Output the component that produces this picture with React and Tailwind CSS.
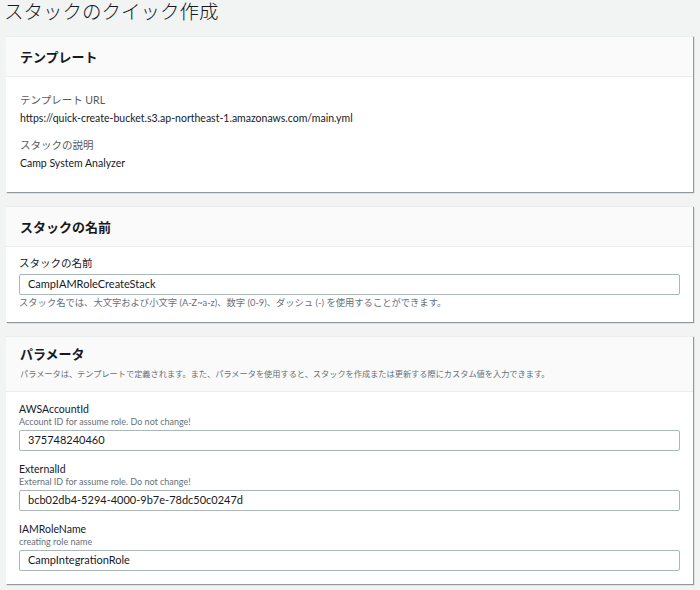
import React from 'react';

const FONT = { fontFamily: 'Lato, "Noto Sans CJK JP", sans-serif' };

const Card = ({ title, desc, children, bodyClass }) => (
  <div className="bg-white ml-[6px] mr-[7px] shadow-[1px_1px_1px_0_rgba(0,28,36,0.3),1px_1px_1px_0_rgba(0,28,36,0.15)] border-t border-[#eaeded]">
    <div className={`bg-[#fafafa] border-b border-[#eaeded] px-[14px] ${desc ? 'pt-[7px] pb-[10px]' : 'h-[40px] flex items-center'}`}>
      <h2 className="text-[13px] font-bold text-[#16191f] leading-[20px]">{title}</h2>
      {desc && <p className="text-[8.2px] text-[#687078] leading-[14px] mt-[3px]">{desc}</p>}
    </div>
    <div className={bodyClass}>{children}</div>
  </div>
);

const Field = ({ label, hint, value }) => (
  <div>
    <div className="text-[10.5px] text-[#16191f] leading-[14px]">{label}</div>
    {hint && <div className="text-[9px] text-[#687078] leading-[11px]">{hint}</div>}
    <div className="mt-[3px] h-[21px] border border-[#aab7b8] rounded-[2px] flex items-center px-[8px] text-[11px] text-[#16191f]">
      {value}
    </div>
  </div>
);

export default function App() {
  return (
    <div className="bg-[#f2f3f3] w-[700px] h-[590px] overflow-hidden" style={FONT}>
      <h1 className="text-[19.5px] font-light text-[#16191f] leading-[24px] pl-[4px]">スタックのクイック作成</h1>
      <div className="h-[12px]" />
      <Card title="テンプレート" bodyClass="px-[14px] pt-[15px] pb-[21px]">
        <div className="text-[10.5px] text-[#545b64] leading-[16px]">テンプレート URL</div>
        <div className="text-[10.5px] text-[#16191f] leading-[16px] mt-[2px]">https://quick-create-bucket.s3.ap-northeast-1.amazonaws.com/main.yml</div>
        <div className="text-[10.5px] text-[#545b64] leading-[16px] mt-[11px]">スタックの説明</div>
        <div className="text-[10.5px] text-[#16191f] leading-[16px] mt-[2px]">Camp System Analyzer</div>
      </Card>
      <div className="h-[14px]" />
      <Card title="スタックの名前" bodyClass="px-[13px] pt-[8px] pb-[12px]">
        <div className="text-[10.5px] text-[#16191f] leading-[16px]">スタックの名前</div>
        <div className="mt-[3px] h-[21px] border border-[#aab7b8] rounded-[2px] flex items-center px-[8px] text-[11px] text-[#16191f]">CampIAMRoleCreateStack</div>
        <div className="text-[9.3px] text-[#687078] leading-[14px] mt-[1px]">スタック名では、大文字および小文字 (A-Z~a-z)、数字 (0-9)、ダッシュ (-) を使用することができます。</div>
      </Card>
      <div className="h-[14px]" />
      <Card
        title="パラメータ"
        desc="パラメータは、テンプレートで定義されます。また、パラメータを使用すると、スタックを作成または更新する際にカスタム値を入力できます。"
        bodyClass="px-[13px] pt-[10px] pb-[13px] flex flex-col gap-[11px]"
      >
        <Field label="AWSAccountId" hint="Account ID for assume role. Do not change!" value="375748240460" />
        <Field label="ExternalId" hint="External ID for assume role. Do not change!" value="bcb02db4-5294-4000-9b7e-78dc50c0247d" />
        <Field label="IAMRoleName" hint="creating role name" value="CampIntegrationRole" />
      </Card>
    </div>
  );
}
